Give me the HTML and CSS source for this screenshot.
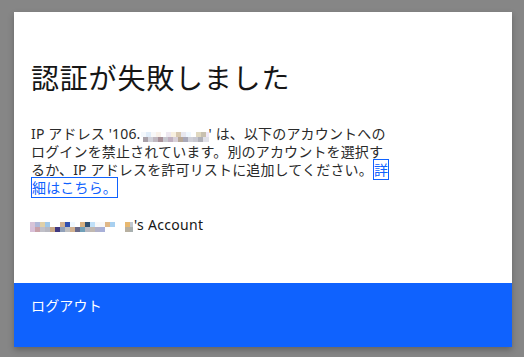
FILE: index.html
```html
<!DOCTYPE html>
<html lang="ja">
<head>
    <meta charset="UTF-8">
    <meta name="viewport" content="width=device-width, initial-scale=1.0">
    <title>認証が失敗しました</title>
    <link rel="stylesheet" href="styles.css">
</head>
<body>
    <div class="modal">
        <div class="modal-header">
            <h2 class="modal-title">認証が失敗しました</h2>
        </div>
        <div class="modal-content">
            <p class="modal-text">IP アドレス '106.<span class="redact redact-ip"></span>' は、以下のアカウントへのログインを禁止されています。別のアカウントを選択するか、IP アドレスを許可リストに追加してください。<a class="link" href="#">詳細はこちら。</a></p>
            <p class="account"><span class="redact redact-name"></span>'s Account</p>
        </div>
        <div class="modal-footer">
            <button class="btn-primary" type="button">ログアウト</button>
        </div>
    </div>
</body>
</html>
```

FILE: styles.css
```css
body, html {
    margin: 0;
    padding: 0;
    height: 100%;
}

body {
    background-color: #868686;
    font-family: "Noto Sans", "Noto Sans CJK JP", sans-serif;
    color: #161616;
    overflow: hidden;
}

.modal {
    width: 498px;
    margin: 12px 0 0 14px;
    background-color: #fff;
    box-shadow: 0 3px 6px rgba(0, 0, 0, .25);
}

.modal-header {
    padding: 47px 16px 0 17px;
}

.modal-title {
    margin: 0;
    font-size: 28px;
    line-height: 36px;
    font-weight: 400;
    letter-spacing: .8px;
    font-family: "Noto Sans CJK JP", sans-serif;
}

.modal-content {
    padding: 30px 16px 49px 17px;
}

.modal-text {
    margin: 0;
    width: 362px;
    font-size: 14px;
    line-height: 18px;
    letter-spacing: .16px;
    color: #2a2a2a;
}

.link {
    color: #0f62fe;
    text-decoration: none;
    border: 1px solid #0f62fe;
    -webkit-box-decoration-break: clone;
    box-decoration-break: clone;
}

.account {
    margin: 19px 0 0 -1px;
    font-size: 14px;
    line-height: 18px;
    letter-spacing: .3px;
}

.redact {
    display: inline-block;
    height: 10px;
    background-repeat: no-repeat;
    background-size: 100% 5px;
    background-position: 0 0, 0 5px;
}

.redact-ip {
    width: 68px;
    vertical-align: -3px;
    background-image:
        linear-gradient(to right, #f4f8fc 0 5px, #e0ecf8 5px 10px, #f8f8f8 10px 15px, #f8f0e8 15px 20px, #fff 20px 25px, #eee8f0 25px 30px, #f8f0e0 30px 35px, #d8c8b0 35px 40px, #e8e8f0 40px 45px, #f0f8ff 45px 50px, #fff 50px 55px, #e0d8c0 55px 60px, #c8c0b0 60px 65px, #f0e8f8 65px 68px),
        linear-gradient(to right, #fff 0 2px, #a8a0a8 2px 7px, #d0d0d8 7px 12px, #c0b8c0 12px 17px, #a89098 17px 22px, #c8c8d0 22px 27px, #c0b0c0 27px 32px, #d8d0d8 32px 37px, #b8a898 37px 42px, #a8a8b8 42px 47px, #d0d0d8 47px 52px, #c8c8d0 52px 57px, #b0b0b8 57px 62px, #e0e0e8 62px 68px);
}

.redact-name {
    width: 103px;
    margin-right: 1px;
    vertical-align: -2px;
    background-image:
        linear-gradient(to right, #d8c4d8 0 5px, #b0b8d8 5px 10px, #e0d0a8 10px 15px, #a0c8e8 15px 20px, #fff 20px 30px, #d0b090 30px 35px, #3050b0 35px 40px, #f0f8ff 40px 45px, #fff 45px 50px, #d8b080 50px 55px, #305070 55px 60px, #c0e0f8 60px 65px, #f8f8f8 65px 75px, #e0b888 75px 80px, #a8d0f0 80px 85px, #fff 85px 95px, #e8b870 95px 100px, #c0c8d0 100px 103px),
        linear-gradient(to right, #d8c0d8 0 5px, #c8a0a8 5px 10px, #c0c0c8 10px 15px, #b8b8c0 15px 20px, #c8a888 20px 25px, #403880 25px 30px, #90a0b8 30px 35px, #c0c0c0 35px 40px, #d0b090 40px 45px, #686888 45px 50px, #70a0b8 50px 55px, #b8b8c0 55px 60px, #c0b8b0 60px 65px, #b0b0c8 65px 70px, #a8b0d8 70px 75px, #fff 75px 95px, #b8b0a0 95px 100px, #a8b0b0 100px 103px);
}

.modal-footer {
    display: flex;
}

.btn-primary {
    flex: 1;
    height: 64px;
    margin: 0;
    padding: 13px 16px 14px 17px;
    border: 0;
    text-align: left;
    align-self: flex-start;
    background-color: #0f62fe;
    color: #fff;
    font-family: "Noto Sans CJK JP", sans-serif;
    font-size: 14px;
    line-height: 18px;
    letter-spacing: .16px;
    display: flex;
    align-items: flex-start;
}
```
